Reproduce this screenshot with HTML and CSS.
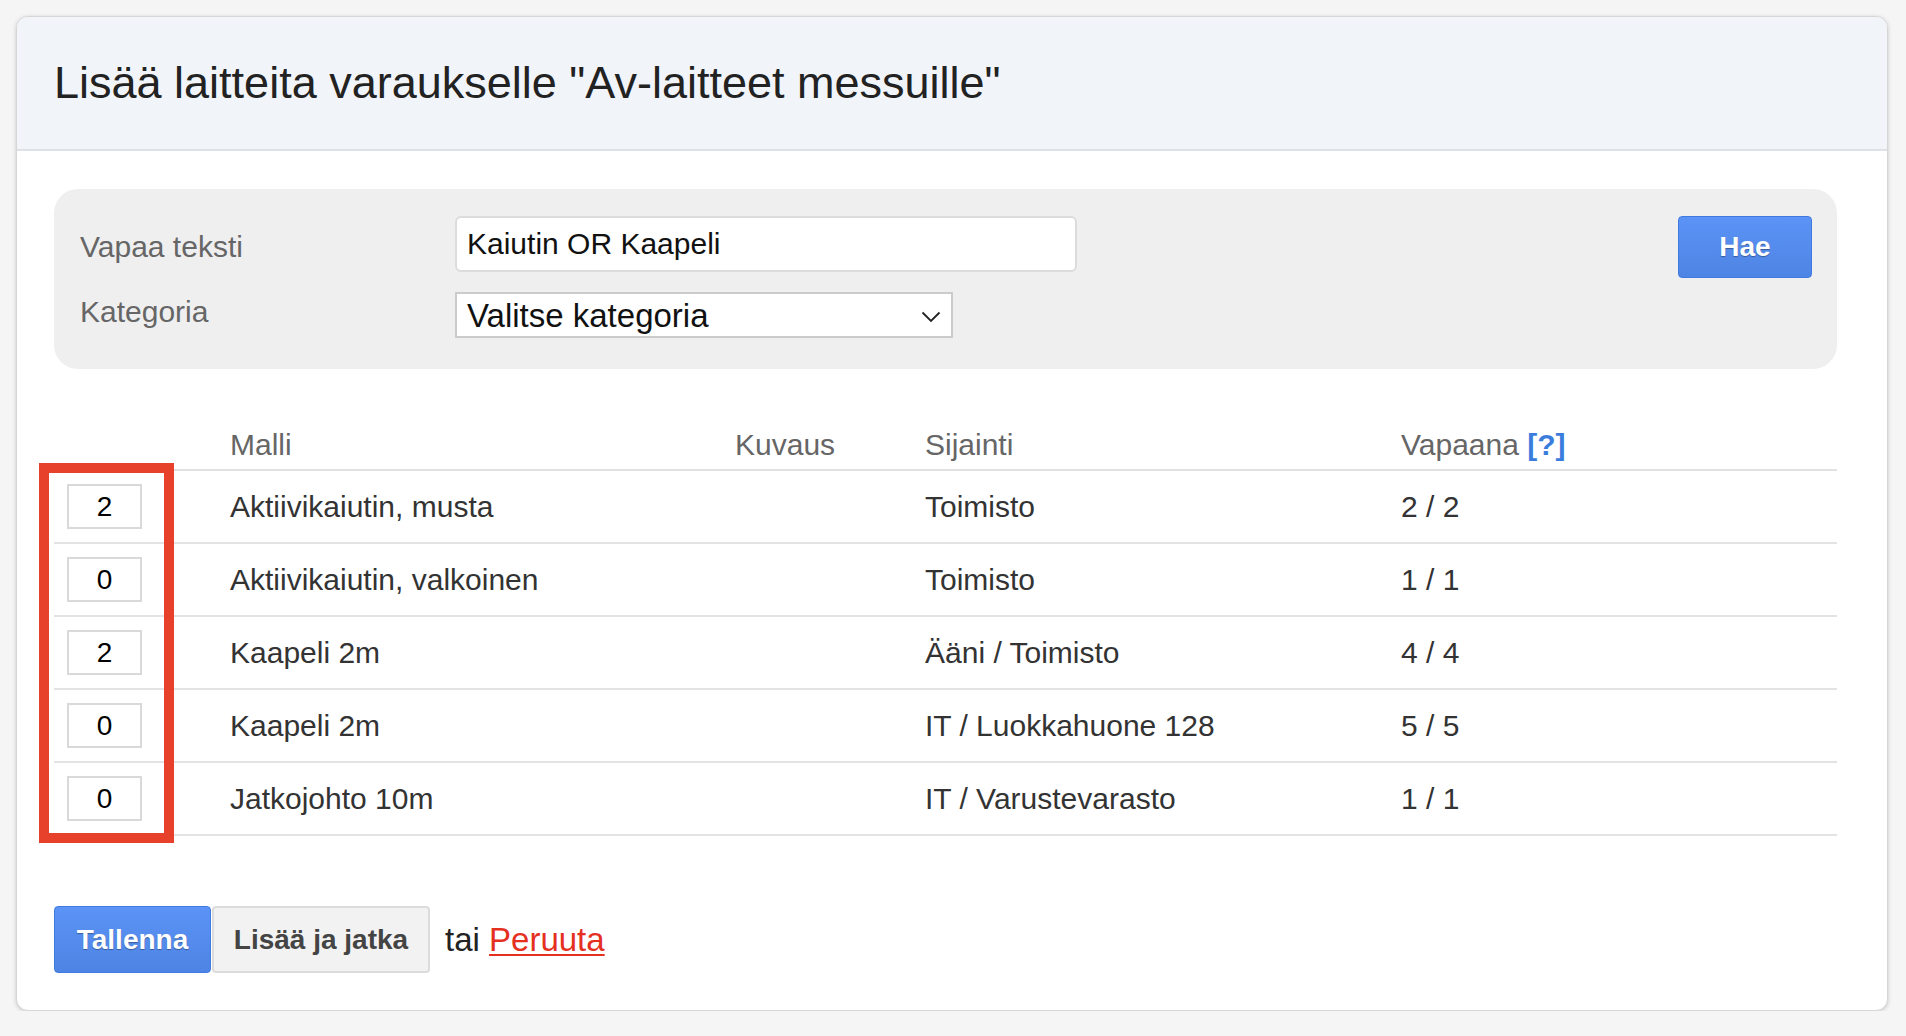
FILE: index.html
```html
<!DOCTYPE html>
<html lang="fi">
<head>
<meta charset="utf-8">
<title>Lisää laitteita</title>
<link rel="stylesheet" href="styles.css">
</head>
<body>
<div class="card">
  <div class="card-header">
    <h1 class="title">Lisää laitteita varaukselle "Av-laitteet messuille"</h1>
  </div>
  <div class="card-body">
    <form class="search-panel">
      <div class="fields">
        <label class="field-label label-first">Vapaa teksti</label>
        <input class="text-input" type="text" value="Kaiutin OR Kaapeli">
        <label class="field-label label-second">Kategoria</label>
        <div class="select-box">
          <span class="select-text">Valitse kategoria</span>
          <svg class="chevron" width="20" height="12" viewBox="0 0 20 12"><polyline points="1.5,1.5 10,10 18.5,1.5" fill="none" stroke="#222" stroke-width="1.8"/></svg>
        </div>
      </div>
      <button type="button" class="btn btn-primary btn-search">Hae</button>
    </form>

    <div class="results">
      <div class="row head">
        <div class="cell"></div>
        <div class="cell">Malli</div>
        <div class="cell">Kuvaus</div>
        <div class="cell">Sijainti</div>
        <div class="cell">Vapaana <a class="help">[?]</a></div>
      </div>
      <div class="row">
        <div class="cell"><input class="qty" type="text" value="2"></div>
        <div class="cell">Aktiivikaiutin, musta</div>
        <div class="cell"></div>
        <div class="cell">Toimisto</div>
        <div class="cell">2 / 2</div>
      </div>
      <div class="row">
        <div class="cell"><input class="qty" type="text" value="0"></div>
        <div class="cell">Aktiivikaiutin, valkoinen</div>
        <div class="cell"></div>
        <div class="cell">Toimisto</div>
        <div class="cell">1 / 1</div>
      </div>
      <div class="row">
        <div class="cell"><input class="qty" type="text" value="2"></div>
        <div class="cell">Kaapeli 2m</div>
        <div class="cell"></div>
        <div class="cell">Ääni / Toimisto</div>
        <div class="cell">4 / 4</div>
      </div>
      <div class="row">
        <div class="cell"><input class="qty" type="text" value="0"></div>
        <div class="cell">Kaapeli 2m</div>
        <div class="cell"></div>
        <div class="cell">IT / Luokkahuone 128</div>
        <div class="cell">5 / 5</div>
      </div>
      <div class="row">
        <div class="cell"><input class="qty" type="text" value="0"></div>
        <div class="cell">Jatkojohto 10m</div>
        <div class="cell"></div>
        <div class="cell">IT / Varustevarasto</div>
        <div class="cell">1 / 1</div>
      </div>
      <div class="highlight"></div>
    </div>

    <div class="actions">
      <button type="button" class="btn btn-primary btn-save">Tallenna</button>
      <button type="button" class="btn btn-secondary btn-continue">Lisää ja jatka</button>
      <span class="or">tai <a class="cancel" href="#">Peruuta</a></span>
    </div>
  </div>
</div>
</body>
</html>
```

FILE: styles.css
```css
* { box-sizing: border-box; }

html, body {
  margin: 0;
  background: #f5f5f5;
}

body {
  padding: 16px 18px 0 16px;
  font-family: "Liberation Sans", Arial, Helvetica, sans-serif;
  color: #333;
}

.card {
  background: #fff;
  border: 1px solid #d6d6d6;
  border-radius: 12px;
  box-shadow: 0 1px 4px rgba(0, 0, 0, 0.18);
  overflow: hidden;
}

.card-header {
  background: #f1f4f9;
  border-bottom: 2px solid #dde1e8;
  padding: 39px 0 0 37px;
  height: 134px;
}

.title {
  margin: 0;
  font-weight: normal;
  font-size: 45px;
  line-height: 54px;
  color: #222;
}

.card-body {
  padding: 38px 50px 37px 37px;
}

/* search panel */
.search-panel {
  display: flex;
  justify-content: space-between;
  align-items: flex-start;
  background: #efefef;
  border-radius: 24px;
  padding: 27px 25px 31px 26px;
  margin: 0;
}

.fields {
  display: grid;
  grid-template-columns: 375px auto;
  grid-template-rows: 56px 46px;
  row-gap: 20px;
}

.field-label {
  font-size: 30px;
  line-height: 34px;
  color: #666;
  align-self: start;
}

.label-first { padding-top: 14px; }
.label-second { padding-top: 3px; }

.text-input {
  width: 622px;
  height: 56px;
  border: 2px solid #dcdcdc;
  border-radius: 6px;
  padding: 0 10px;
  font-family: inherit;
  font-size: 30px;
  color: #111;
  background: #fff;
  outline: none;
}

.select-box {
  width: 498px;
  height: 46px;
  border: 2px solid #cbcbcb;
  background: #fff;
  padding: 0 10px 0 10px;
  display: flex;
  align-items: center;
  justify-content: space-between;
}

.select-text {
  font-size: 33px;
  line-height: 38px;
  color: #111;
  padding-top: 2px;
}

.chevron {
  display: block;
  margin-top: 4px;
}

/* buttons */
.btn {
  font-family: inherit;
  font-weight: bold;
  font-size: 28px;
  border-radius: 4px;
  padding: 0;
  cursor: pointer;
}

.btn-primary {
  color: #fff;
  background: linear-gradient(#5b93f6, #4e85e4);
  border: 1px solid #3f7ae0;
  text-shadow: 0 1px 1px rgba(0, 0, 0, 0.35);
}

.btn-secondary {
  color: #444;
  background: #f2f2f2;
  border: 2px solid #dcdcdc;
}

.btn-search {
  width: 134px;
  height: 62px;
}

/* results */
.results {
  position: relative;
  margin-top: 59px;
}

.row {
  display: grid;
  grid-template-columns: 163px 505px 190px 476px 1fr;
  align-items: center;
  height: 73px;
  border-bottom: 2px solid #e3e3e3;
  font-size: 30px;
  color: #333;
}

.row.head {
  height: 43px;
  align-items: start;
  color: #666;
  border-bottom: 2px solid #e1e1e1;
}

.cell {
  padding-left: 13px;
  line-height: 34px;
  white-space: nowrap;
}

.help {
  color: #3b7ddd;
  font-weight: bold;
  text-decoration: none;
}

.qty {
  display: block;
  width: 75px;
  height: 45px;
  border: 2px solid #d9d9d9;
  background: #fff;
  text-align: center;
  font-family: inherit;
  font-size: 28px;
  color: #000;
  padding: 0;
  outline: none;
}

.highlight {
  position: absolute;
  left: -15px;
  top: 35px;
  width: 135px;
  height: 380px;
  border: 10px solid #e8412b;
  pointer-events: none;
}

/* actions */
.actions {
  display: flex;
  align-items: center;
  margin-top: 70px;
}

.btn-save {
  width: 157px;
  height: 67px;
}

.btn-continue {
  width: 218px;
  height: 67px;
  margin-left: 1px;
}

.or {
  margin-left: 15px;
  font-size: 33px;
  color: #222;
}

.cancel {
  color: #e5301f;
  text-decoration: underline;
  text-decoration-thickness: 2px;
  text-underline-offset: 3px;
}
```
